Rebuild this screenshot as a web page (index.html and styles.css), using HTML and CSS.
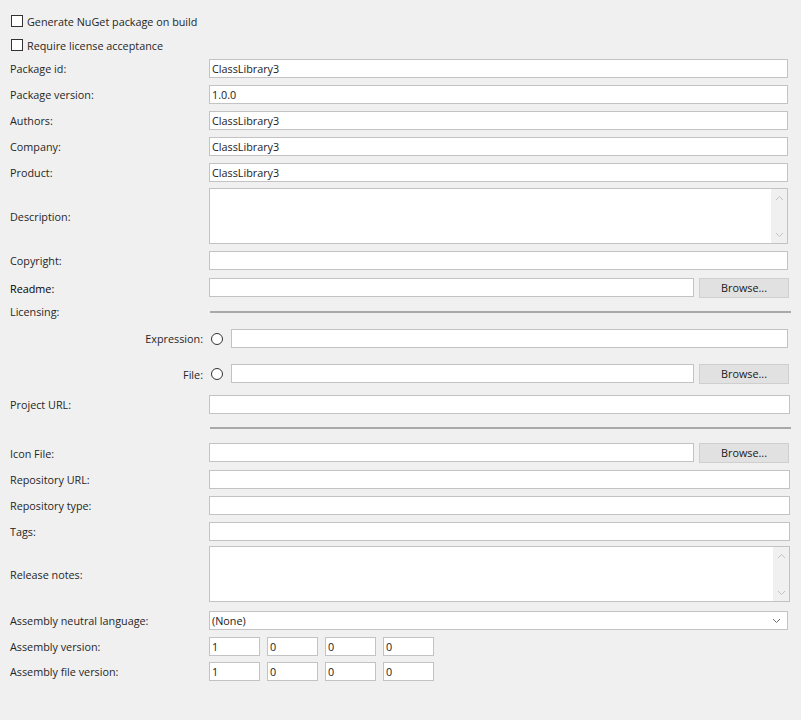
FILE: index.html
```html
<!DOCTYPE html>
<html>
<head>
<meta charset="utf-8">
<link rel="stylesheet" href="styles.css">
</head>
<body>
<div class="page">
  <div class="check"><span class="box"></span><span>Generate NuGet package on build</span></div>
  <div class="check"><span class="box"></span><span>Require license acceptance</span></div>

  <div class="form">
    <div class="row"><span class="lbl">Package id:</span><div class="input">ClassLibrary3</div></div>
    <div class="row"><span class="lbl">Package version:</span><div class="input">1.0.0</div></div>
    <div class="row"><span class="lbl">Authors:</span><div class="input">ClassLibrary3</div></div>
    <div class="row"><span class="lbl">Company:</span><div class="input">ClassLibrary3</div></div>
    <div class="row"><span class="lbl">Product:</span><div class="input">ClassLibrary3</div></div>
    <div class="row mt6"><span class="lbl">Description:</span>
      <div class="input area">
        <div class="scroll">
          <svg width="9" height="6" viewBox="0 0 9 6"><polyline points="1,5 4.5,1.5 8,5" fill="none" stroke="#c2c2c2" stroke-width="1"/></svg>
          <svg width="9" height="6" viewBox="0 0 9 6"><polyline points="1,1 4.5,4.5 8,1" fill="none" stroke="#c2c2c2" stroke-width="1"/></svg>
        </div>
      </div>
    </div>
    <div class="row"><span class="lbl">Copyright:</span><div class="input"></div></div>
    <div class="row mt8"><span class="lbl dark">Readme:</span>
      <div class="with-btn"><div class="input"></div><div class="btn">Browse...</div></div>
    </div>
    <div class="row mt4"><span class="lbl">Licensing:</span><div class="sep"></div></div>
    <div class="row mt8"><span class="lbl right">Expression:</span>
      <div class="radio-field"><span class="radio"></span><div class="input"></div></div>
    </div>
    <div class="row mt16"><span class="lbl right">File:</span>
      <div class="radio-field"><span class="radio"></span><div class="with-btn"><div class="input"></div><div class="btn">Browse...</div></div></div>
    </div>
    <div class="row mt11"><span class="lbl">Project URL:</span><div class="input wide"></div></div>
    <div class="row mt4"><span class="lbl"></span><div class="sep"></div></div>
    <div class="row mt6"><span class="lbl">Icon File:</span>
      <div class="with-btn"><div class="input"></div><div class="btn">Browse...</div></div>
    </div>
    <div class="row"><span class="lbl">Repository URL:</span><div class="input wide"></div></div>
    <div class="row"><span class="lbl">Repository type:</span><div class="input wide"></div></div>
    <div class="row"><span class="lbl">Tags:</span><div class="input wide"></div></div>
    <div class="row mt5"><span class="lbl">Release notes:</span>
      <div class="input area wide">
        <div class="scroll">
          <svg width="9" height="6" viewBox="0 0 9 6"><polyline points="1,5 4.5,1.5 8,5" fill="none" stroke="#c2c2c2" stroke-width="1"/></svg>
          <svg width="9" height="6" viewBox="0 0 9 6"><polyline points="1,1 4.5,4.5 8,1" fill="none" stroke="#c2c2c2" stroke-width="1"/></svg>
        </div>
      </div>
    </div>
    <div class="row mt9"><span class="lbl">Assembly neutral language:</span>
      <div class="input combo"><span>(None)</span>
        <svg width="9" height="6" viewBox="0 0 9 6"><polyline points="1,1 4.5,4.5 8,1" fill="none" stroke="#707070" stroke-width="1"/></svg>
      </div>
    </div>
    <div class="row"><span class="lbl">Assembly version:</span>
      <div class="ver"><div class="input">1</div><div class="input">0</div><div class="input">0</div><div class="input">0</div></div>
    </div>
    <div class="row mt6"><span class="lbl">Assembly file version:</span>
      <div class="ver"><div class="input">1</div><div class="input">0</div><div class="input">0</div><div class="input">0</div></div>
    </div>
  </div>
</div>
</body>
</html>
```

FILE: styles.css
```css
html, body {
  margin: 0;
  background: #f0f0f0;
}
body {
  font-family: "Open Sans", "Noto Sans", sans-serif;
  font-size: 10.8px;
  color: #262626;
  width: 801px;
  height: 720px;
  overflow: hidden;
}
.page {
  padding: 9px 13px 0 10px;
}
.check {
  display: flex;
  align-items: center;
  height: 24px;
  gap: 4px;
}
.box {
  width: 12px;
  height: 12px;
  box-sizing: border-box;
  border: 1px solid #333;
  background: #fff;
  margin-left: 1px;
}
.form {
  margin-top: 2px;
}
.row {
  display: grid;
  grid-template-columns: 199px 1fr;
  align-items: center;
  min-height: 19px;
  margin-top: 7px;
}
.row:first-child {
  margin-top: 0;
}
.mt4 { margin-top: 4px; }
.mt5 { margin-top: 5px; }
.mt6 { margin-top: 6px; }
.mt8 { margin-top: 8px; }
.mt9 { margin-top: 9px; }
.mt11 { margin-top: 11px; }
.mt16 { margin-top: 16px; }
.lbl {
  white-space: nowrap;
  line-height: 19px;
}
.lbl.dark {
  color: #000;
}
.lbl.right {
  text-align: right;
  padding-right: 6px;
}
.input {
  height: 19px;
  box-sizing: border-box;
  border: 1px solid #c3c3c3;
  background: #fff;
  padding: 0 2px;
  line-height: 17px;
  color: #1a1a1a;
  white-space: nowrap;
  overflow: hidden;
}
.input.wide {
  margin-right: -2px;
}
.input.area {
  height: 56px;
  position: relative;
}
.scroll {
  position: absolute;
  top: 0;
  right: 0;
  bottom: 0;
  width: 16px;
  background: #f0f0f0;
  display: flex;
  flex-direction: column;
  justify-content: space-between;
  align-items: center;
  padding: 6px 0 5px;
  box-sizing: border-box;
}
.with-btn {
  display: flex;
  gap: 5px;
  min-width: 0;
  flex: 1;
}
.with-btn .input {
  flex: 1;
}
.btn {
  width: 90px;
  height: 20px;
  box-sizing: border-box;
  border: 1px solid #cfcfcf;
  background: #e1e1e1;
  text-align: center;
  line-height: 18px;
  color: #1a1a1a;
  flex: none;
  margin-right: -1px;
}
.sep {
  height: 2px;
  background: #a9a9a9;
  margin-left: 1px;
  margin-right: -3px;
}
.radio-field {
  display: flex;
  align-items: center;
  gap: 8px;
}
.radio-field > .input,
.radio-field > .with-btn {
  flex: 1;
}
.radio {
  width: 12px;
  height: 12px;
  box-sizing: border-box;
  border: 1px solid #333;
  border-radius: 50%;
  background: #fff;
  margin-left: 2px;
  flex: none;
}
.combo {
  display: flex;
  align-items: center;
  justify-content: space-between;
  padding-right: 6px;
}
.ver {
  display: flex;
  gap: 7px;
}
.ver .input {
  width: 51px;
}
```
